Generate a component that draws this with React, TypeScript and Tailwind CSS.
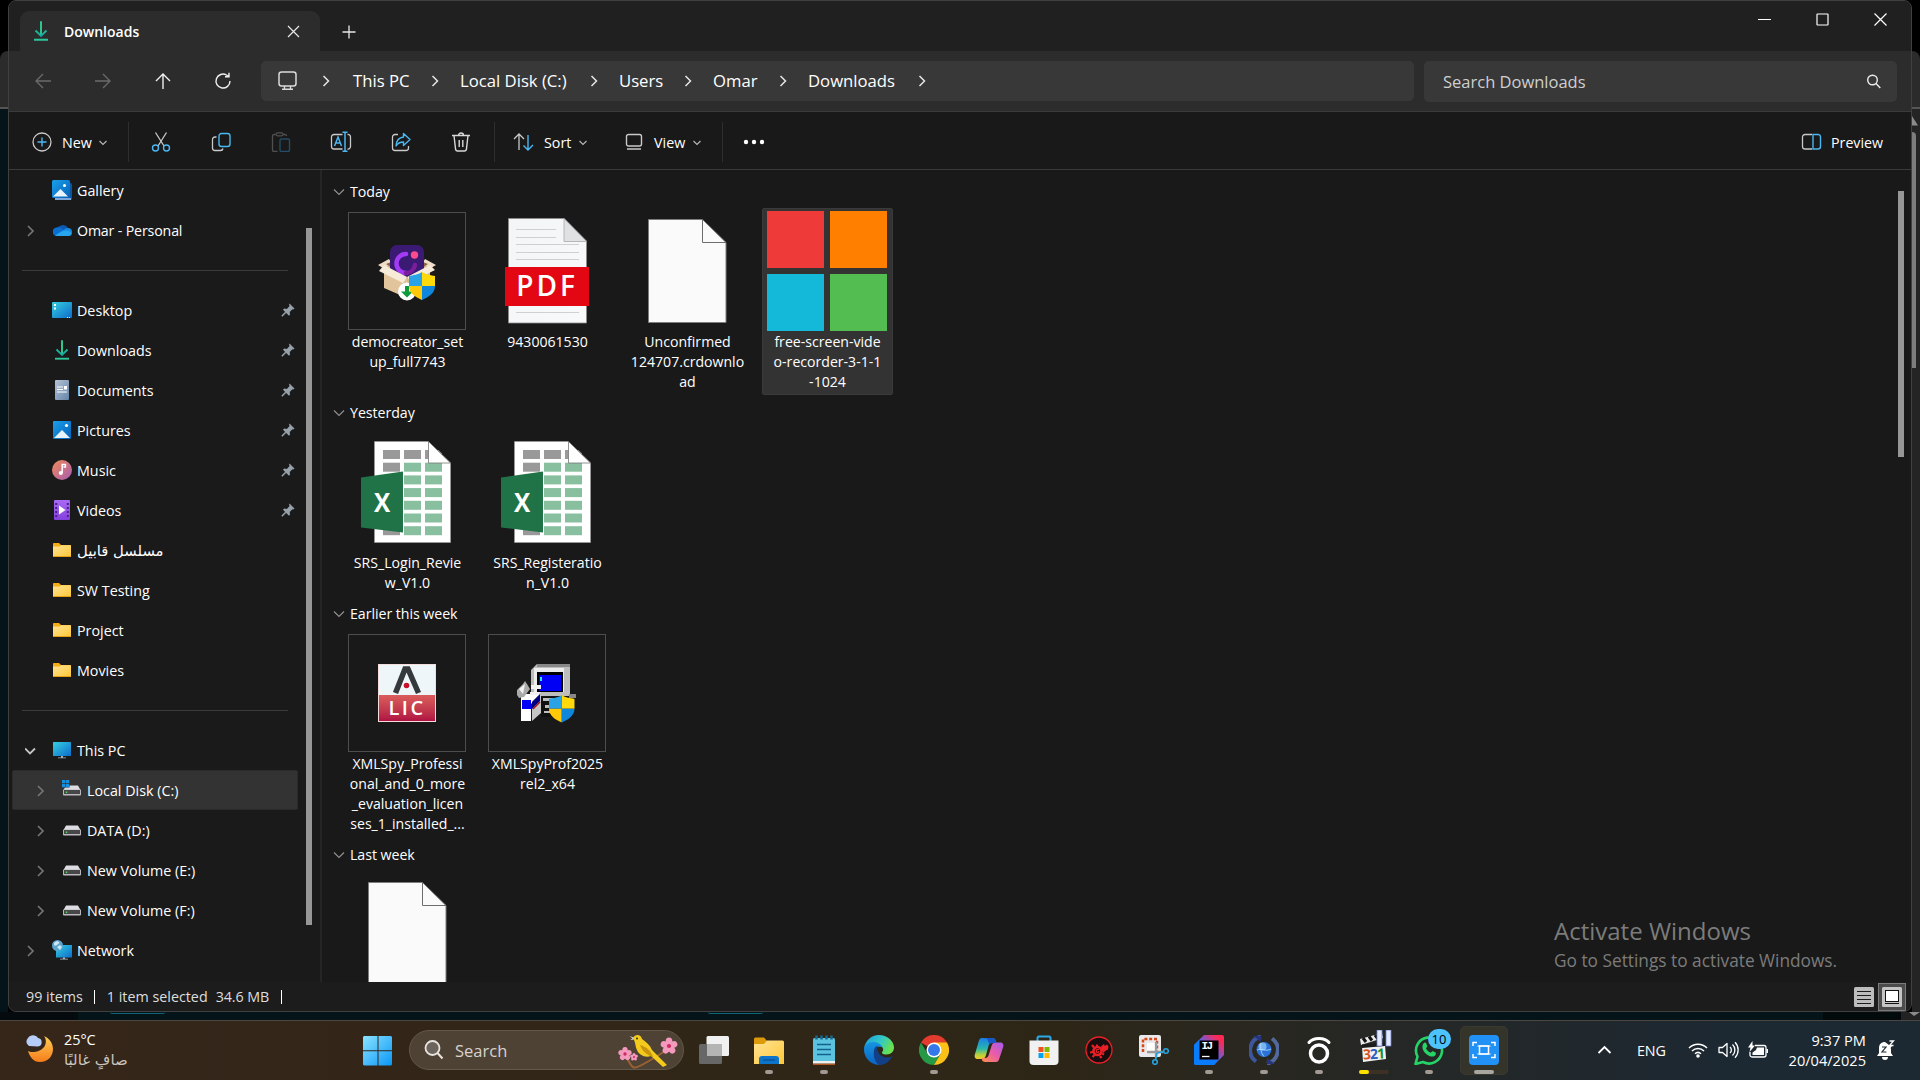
import React from "react";

type IconProps = { w?: number; h?: number; vb?: string; className?: string; children?: React.ReactNode };

function Svg({ w = 20, h = 20, vb, className = "", children }: IconProps) {
  return (
    <svg width={w} height={h} viewBox={vb ?? `0 0 ${w} ${h}`} fill="none" className={`shrink-0 ${className}`}>
      {children}
    </svg>
  );
}

/* ---------- gradients shared by several icons ---------- */
function Defs() {
  return (
    <svg width="0" height="0" className="absolute">
      <defs>
        <linearGradient id="gDown" x1="0" y1="0" x2="0" y2="1"><stop offset="0" stopColor="#35d08a" /><stop offset="1" stopColor="#12a7a0" /></linearGradient>
        <linearGradient id="gPic" x1="0" y1="0" x2="1" y2="1"><stop offset="0" stopColor="#1ba0ea" /><stop offset="1" stopColor="#0660b8" /></linearGradient>
        <linearGradient id="gDesk" x1="0" y1="0" x2="1" y2="1"><stop offset="0" stopColor="#35cfe0" /><stop offset="1" stopColor="#0d6ccb" /></linearGradient>
        <linearGradient id="gDoc" x1="0" y1="0" x2="1" y2="1"><stop offset="0" stopColor="#b5c3d6" /><stop offset="1" stopColor="#6484a8" /></linearGradient>
        <linearGradient id="gMusic" x1="0" y1="0" x2="1" y2="1"><stop offset="0" stopColor="#f28b57" /><stop offset="1" stopColor="#a75bb4" /></linearGradient>
        <linearGradient id="gVid" x1="0" y1="0" x2="0" y2="1"><stop offset="0" stopColor="#a86af5" /><stop offset="1" stopColor="#8440dc" /></linearGradient>
        <linearGradient id="gFold" x1="0" y1="0" x2="1" y2="1"><stop offset="0" stopColor="#ffe394" /><stop offset="1" stopColor="#ffc83a" /></linearGradient>
        <linearGradient id="gStart" x1="0" y1="0" x2="1" y2="1"><stop offset="0" stopColor="#8be3ff" /><stop offset="1" stopColor="#0a97f7" /></linearGradient>
        <linearGradient id="gPage" x1="0" y1="0" x2="1" y2="1"><stop offset="0" stopColor="#f4f5f6" /><stop offset="1" stopColor="#f8f9fa" /></linearGradient>
        <linearGradient id="gMoon" x1="0" y1="0" x2="0" y2="1"><stop offset="0" stopColor="#ffcf57" /><stop offset="1" stopColor="#f57c1a" /></linearGradient>
      </defs>
    </svg>
  );
}

/* ---------- sidebar icons ---------- */
const DownloadIcon = () => (
  <Svg>
    <path d="M10 0.5v13.500M4.500 9.500L10 15l5.500-5.500" stroke="url(#gDown)" strokeWidth="1.900" />
    <path d="M10 0.500v13" stroke="#2fc690" strokeWidth="1.900" />
    <path d="M3 18.700h14" stroke="#2cc69a" strokeWidth="1.900" />
  </Svg>
);
const GalleryIcon = () => (
  <Svg>
    <rect x="3" y="3" width="17" height="17" rx="1.500" fill="#0a559f" />
    <rect x="3" y="18" width="16" height="2" fill="#7da7d8" />
    <rect x="0" y="0" width="18" height="18" rx="1.500" fill="url(#gPic)" />
    <path d="M1 16.500L8.500 9l7.500 7.500z" fill="#e8f3fc" />
    <circle cx="12.500" cy="5.500" r="1.500" fill="#fff" />
  </Svg>
);
const CloudIcon = () => (
  <Svg>
    <path d="M5 9a6 5.500 0 0 1 11-1l-4 6z" fill="#0c59b0" />
    <path d="M4.500 16a4.300 4.300 0 0 1 0-8.500c3-.6 6 1 8 3.500L8 16z" fill="#0a6fd0" />
    <path d="M16 16a4 4 0 0 0 0-8c-3 0-4 2-7 3.500L4 16z" fill="#1689e0" />
    <path d="M3 15.500c3-2 8-5 11-5s5 1.500 5.500 3-1.500 2.500-3.500 2.500H5z" fill="#27a6ee" />
  </Svg>
);
const DesktopIcon = () => (
  <Svg>
    <rect x="0" y="2" width="20" height="16" rx="1" fill="url(#gDesk)" />
    <path d="M2 4h2v2H2zM2 7.500h2v2H2zM15 17h1v1h-1zM17 17h1v1h-1z" fill="#fff" />
  </Svg>
);
const DocumentsIcon = () => (
  <Svg>
    <rect x="3" y="0" width="14" height="20" rx="1" fill="url(#gDoc)" />
    <path d="M5 7h6M5 9.500h6M5 12h10" stroke="#fff" strokeWidth="1.200" />
    <rect x="12" y="6" width="3" height="3.500" fill="#fff" />
  </Svg>
);
const PicturesIcon = () => (
  <Svg>
    <rect x="1" y="1" width="18" height="18" rx="1" fill="url(#gPic)" />
    <path d="M2 18l8-8 8 8z" fill="#e8f3fc" />
    <circle cx="14.500" cy="5.500" r="1.600" fill="#fff" />
  </Svg>
);
const MusicIcon = () => (
  <Svg>
    <circle cx="10" cy="10" r="10" fill="url(#gMusic)" />
    <circle cx="8.800" cy="13" r="2.100" fill="#fff" />
    <path d="M10.200 13V4.500h3.200v2.500h-2" stroke="#fff" strokeWidth="1.500" />
  </Svg>
);
const VideosIcon = () => (
  <Svg>
    <rect x="2" y="0" width="16" height="20" rx="1" fill="url(#gVid)" />
    <path d="M4.200 3v16M15.800 3v16" stroke="#4a1e87" strokeWidth="2" strokeDasharray="2 2" />
    <path d="M7 5.500v9l6.500-4.500z" fill="#fff" />
  </Svg>
);
const FolderIcon = () => (
  <Svg>
    <path d="M1 4a1 1 0 0 1 1-1h5l2 2h9a1 1 0 0 1 1 1v10H1z" fill="#f3ac13" />
    <path d="M1 6.500h6.500L9 5.300h10V16.500H1z" fill="url(#gFold)" />
    <path d="M1 16.500h18" stroke="#e2a114" />
  </Svg>
);
const PcIcon = () => (
  <Svg>
    <rect x="1" y="2" width="18" height="14" rx=".5" fill="url(#gDesk)" />
    <path d="M9 16h2v1.500h3v.8H6v-.8h3z" fill="#a5afb8" />
  </Svg>
);
const DriveIcon = ({ win = false }: { win?: boolean }) => (
  <Svg>
    <path d="M4 5.500h12L19 11H1z" fill="#dcdce2" />
    <rect x="1" y="9.500" width="18" height="6" rx=".8" fill="#b9b9bd" />
    <rect x="2" y="10" width="16" height="4" fill="#47474a" />
    <rect x="3.800" y="11.500" width="1.500" height="1.500" fill="#49e04c" />
    {win && (
      <>
        <path d="M0 0h7.500v7.500H0z" fill="#333333" />
        <path d="M0 0h3.300v3.300H0zM3.900 0h3.300v3.300H3.900zM0 3.900h3.300v3.300H0zM3.900 3.900h3.300v3.300H3.900z" fill="#168fdf" />
      </>
    )}
  </Svg>
);
const NetworkIcon = () => (
  <Svg>
    <rect x="4" y="5" width="16" height="12.500" fill="url(#gDesk)" />
    <path d="M11 17.500h2v1.200h3v.8H8v-.8h3z" fill="#b5bcc3" />
    <circle cx="5.500" cy="5.500" r="5.500" fill="#5aa5ce" />
    <path d="M2 3c2-2 4-2 5-1s-1 2-2 3-2 1-3 0zM5 7l3-2 2 2-2 3z" fill="#cbe6f5" />
  </Svg>
);
const Pin = () => (
  <Svg w={14} h={14} className="ml-auto mr-[2px]">
    <path d="M8.500.5l5 5-1.200.9-.8-.2-2.800 2.900.3 2.500-1 1.200L2 6.800 3.200 5.600l2.600.3L8.600 3l-.6-1.300z" fill="#97a1a9" />
    <path d="M4.800 9.300L.8 13.300" stroke="#97a1a9" strokeWidth="1.500" />
  </Svg>
);

/* ---------- sidebar ---------- */
type Row = { label?: string; icon?: React.ReactNode; pin?: boolean; arrow?: "r" | "d"; child?: boolean; sel?: boolean; ar?: boolean; tight?: boolean };
const rows: Row[] = [
  { label: "Gallery", icon: <GalleryIcon /> },
  { label: "Omar - Personal", icon: <CloudIcon />, arrow: "r", tight: true },
  {},
  { label: "Desktop", icon: <DesktopIcon />, pin: true },
  { label: "Downloads", icon: <DownloadIcon />, pin: true },
  { label: "Documents", icon: <DocumentsIcon />, pin: true },
  { label: "Pictures", icon: <PicturesIcon />, pin: true },
  { label: "Music", icon: <MusicIcon />, pin: true },
  { label: "Videos", icon: <VideosIcon />, pin: true },
  { label: "مسلسل قابيل", icon: <FolderIcon />, ar: true },
  { label: "SW Testing", icon: <FolderIcon /> },
  { label: "Project", icon: <FolderIcon /> },
  { label: "Movies", icon: <FolderIcon /> },
  {},
  { label: "This PC", icon: <PcIcon />, arrow: "d" },
  { label: "Local Disk (C:)", icon: <DriveIcon win />, arrow: "r", child: true, sel: true },
  { label: "DATA (D:)", icon: <DriveIcon />, arrow: "r", child: true },
  { label: "New Volume (E:)", icon: <DriveIcon />, arrow: "r", child: true },
  { label: "New Volume (F:)", icon: <DriveIcon />, arrow: "r", child: true },
  { label: "Network", icon: <NetworkIcon />, arrow: "r" },
];

function SideRow({ r }: { r: Row }) {
  if (!r.label)
    return (
      <div className="flex h-10 items-center px-[10px]">
        <div className="h-px w-full bg-[#3b3b3b]" />
      </div>
    );
  return (
    <div className={`flex h-10 items-center border ${r.sel ? "rounded-[2px] border-[#2b2b2b] bg-[#333333]" : "border-transparent"} ${r.child ? "pl-[22px]" : "pl-[12px]"}`}>
      <div className="flex w-[27px] shrink-0 pt-px">
        {r.arrow === "r" && <Svg w={12} h={12}><path d="M3 1l5 5-5 5" stroke="#757575" strokeWidth="1.700" /></Svg>}
        {r.arrow === "d" && <Svg w={12} h={12}><path d="M0 3.500l5 5 5-5" stroke="#c4c4c4" strokeWidth="1.800" /></Svg>}
      </div>
      {r.icon}
      <span className={`ml-[5px] whitespace-nowrap pt-[2px] text-white ${r.ar ? "font-['DejaVu_Sans',sans-serif] text-[14.800px]" : r.tight ? "text-[14.200px] tracking-[-0.150px]" : "text-[14.300px]"}`}>{r.label}</span>
      {r.pin && <Pin />}
    </div>
  );
}

function Sidebar() {
  return (
    <div className="flex h-full w-[311px] shrink-0 bg-[#1a1a1a]">
      <div className="ml-[3px] w-[286px]">
        {rows.map((r, i) => <SideRow key={i} r={r} />)}
      </div>
      <div className="ml-2 mt-[58px] h-[697px] w-[6px] bg-[#979797]" />
    </div>
  );
}

/* ---------- file thumbnails ---------- */
const shield = (x: number, y: number, s: number) => (
  <g transform={`translate(${x} ${y}) scale(${s})`}>
    <path d="M13 0C9 3 4 3 0 4v10h13z" fill="#29a3e6" />
    <path d="M13 0c4 3 9 3 13 4v10H13z" fill="#ffd90a" />
    <path d="M0 14c0 7 6 11 13 14V14z" fill="#ffc907" />
    <path d="M26 14c0 7-6 11-13 14V14z" fill="#0e86dc" />
  </g>
);

const Framed = ({ children }: { children: React.ReactNode }) => (
  <div className="flex h-[118px] w-[118px] items-center justify-center border border-[#4d4d4d]">{children}</div>
);

const SetupThumb = () => (
  <Framed>
    <Svg w={58} h={56} className="mt-[4px]">
      <path d="M6 18l23-8 23 8v20L29 51 6 41z" fill="#d9b98f" />
      <path d="M0 20l11-6 3 5-9 4zM58 20l-11-6-3 5 9 4z" fill="#efdfc8" />
      <path d="M8 19l21-8 21 8-21 14z" fill="#8b6245" />
      <path d="M12 7a7 7 0 0 1 7-7h20a7 7 0 0 1 7 7v18L29 32 12 25z" fill="#3a1a73" />
      <path d="M28 9a9.500 9.500 0 0 0 0 19" stroke="#a33bf5" strokeWidth="4.500" strokeLinecap="round" />
      <path d="M28 28a9.500 9.500 0 0 0 9-8" stroke="#7c1d9e" strokeWidth="4.500" strokeLinecap="round" />
      <circle cx="36.500" cy="10" r="3.700" fill="#ff4b8c" />
      <path d="M6 26l23 7v20L6 43z" fill="#e2c49c" />
      <path d="M6 20l23 12-4 6L1 26zM52 20L29 32l4 5 24-12z" fill="#f6ead8" />
      <circle cx="29" cy="46.500" r="9" fill="#fff" />
      <path d="M27 41h4v5.500h4l-6 6-6-6h4z" fill="#0c9b3c" />
      {shield(31, 27, 1)}
    </Svg>
  </Framed>
);

const PdfThumb = () => (
  <div className="relative h-[118px] w-[118px]">
    <Svg w={118} h={118}>
      <path d="M20.500 6.500H76l22.500 22.500v82h-78z" fill="url(#gPage)" stroke="#8c8c8c" strokeWidth=".8" />
      <path d="M76 6.500V29.500h22.500z" fill="#dfe1e3" stroke="#a8a8a8" strokeWidth=".8" />
      <path d="M28 17.500h40M28 25.500h40M28 32.500h63M28 40.500h63M28 47.500h63M28 100.500h63" stroke="#cfd0d1" strokeWidth="1.200" />
      <rect x="17" y="55" width="84" height="39" fill="#e30613" />
    </Svg>
    <span className="absolute left-[17px] top-[54px] h-[39px] w-[84px] text-center text-[28px] font-semibold leading-[38px] tracking-[3px] text-white">PDF</span>
  </div>
);

const BlankThumb = () => (
  <Svg w={118} h={118}>
    <path d="M20.500 7.500h54L98 30.500v80H20.500z" fill="#fafafa" stroke="#7d7d7d" />
    <path d="M74.500 7.500v23H98" stroke="#6d6d6d" />
  </Svg>
);

const SquaresThumb = () => (
  <div className="-m-px grid h-[120px] w-[120px] grid-cols-2 gap-[6px]">
    <div className="bg-[#ef3a3a]" />
    <div className="bg-[#ff8000]" />
    <div className="bg-[#14b8d8]" />
    <div className="bg-[#54bd52]" />
  </div>
);

const ExcelThumb = () => (
  <div className="relative h-[118px] w-[118px]">
    <Svg w={118} h={118}>
      <path d="M26.500 8.500H80l22.500 21.500v79.500h-76z" fill="#fff" stroke="#a0a0a0" strokeWidth=".6" />
      {[0, 1, 2, 3, 4, 5, 6].map((r) =>
        [0, 1, 2].map((c) => (
          <rect key={`${r}-${c}`} x={35 + c * 21} y={17 + r * 12.7} width={17} height={9} fill={r === 0 || c === 0 ? "#999999" : "#87bf9f"} />
        )),
      )}
      <path d="M80.500 8.500v21.500h22z" fill="#fff" stroke="#777" strokeWidth=".8" />
      <path d="M81 8l22.500 21.500V8z" fill="#191919" />
      <path d="M13 44.500l42-6v61l-42-5z" fill="#207346" />
    </Svg>
    <span className="absolute left-[13px] top-[53px] w-[42px] scale-x-90 text-center text-[27px] font-bold leading-[31px] text-white">X</span>
  </div>
);

const LicThumb = () => (
  <Framed>
    <div className="flex h-[58px] w-[58px] flex-col border border-[#f4dcdc] bg-[#e8f5fa]">
      <Svg w={56} h={30}>
        <path d="M0 0h56v30H0z" fill="#eef6fa" />
        <path d="M16.500 28L26 4h3l10.500 24" stroke="#35393b" strokeWidth="5.500" />
        <circle cx="27.500" cy="20.500" r="2.800" fill="#c8102e" />
      </Svg>
      <div className="h-[26px] w-[56px] bg-gradient-to-b from-[#da5d5c] to-[#b01143] text-center text-[20px] font-semibold leading-[25px] tracking-[2.500px] text-white">LIC</div>
    </div>
  </Framed>
);

const InstallerThumb = () => (
  <Framed>
    <Svg w={60} h={60} className="mb-px">
      <path d="M20 1h33v32H14V7z" fill="#bdbdbd" />
      <path d="M20 1h33v3H20z" fill="#888" />
      <path d="M17 5h30v24H17z" fill="#ececec" />
      <path d="M20 9h26v20H20z" fill="#000" />
      <path d="M22 12h22v16H22z" fill="#0000f5" />
      <path d="M23 14h2v4h-2z" fill="#25e8ff" />
      <path d="M24 34h32v20H24z" fill="#111" />
      <path d="M26 35h14v3H26zM28 42h8v3h-8zM27 48h12v2H27z" fill="#bdbdbd" />
      <path d="M52 31h7v4h-7z" fill="#888" />
      <path d="M4 31h19l-9 10v17H4z" fill="#fff" />
      <path d="M15 38l9-7v19l-9 8z" fill="#c5c5c5" />
      <path d="M5 37h9v9H5z" fill="#0000f5" />
      <path d="M15 39l8-8v7l-8 8z" fill="#000080" />
      <path d="M16 46l7-7" stroke="#a31313" strokeWidth="1.500" />
      <path d="M0 27l6-6 2-3 2 3 3 5-6 8-5 1-2-3z" fill="#aaa" />
      <path d="M2 26l6-5-2 10zM14 22h10v4H14zM13 29h11l-3 3h-8z" fill="#f1f1f1" />
      {shield(32, 32, 0.98)}
    </Svg>
  </Framed>
);

type FileItem = { lines: string[]; thumb: React.ReactNode; sel?: boolean };
const groups: { title: string; h: string; files: FileItem[] }[] = [
  {
    title: "Today",
    h: "h-[181px]",
    files: [
      { lines: ["democreator_set", "up_full7743"], thumb: <SetupThumb /> },
      { lines: ["9430061530"], thumb: <PdfThumb /> },
      { lines: ["Unconfirmed", "124707.crdownlo", "ad"], thumb: <BlankThumb /> },
      { lines: ["free-screen-vide", "o-recorder-3-1-1", "-1024"], thumb: <SquaresThumb />, sel: true },
    ],
  },
  {
    title: "Yesterday",
    h: "h-[161px]",
    files: [
      { lines: ["SRS_Login_Revie", "w_V1.0"], thumb: <ExcelThumb /> },
      { lines: ["SRS_Registeratio", "n_V1.0"], thumb: <ExcelThumb /> },
    ],
  },
  {
    title: "Earlier this week",
    h: "h-[201px]",
    files: [
      { lines: ["XMLSpy_Professi", "onal_and_0_more", "_evaluation_licen", "ses_1_installed_..."], thumb: <LicThumb /> },
      { lines: ["XMLSpyProf2025", "rel2_x64"], thumb: <InstallerThumb /> },
    ],
  },
  { title: "Last week", h: "h-[120px]", files: [{ lines: [], thumb: <BlankThumb /> }] },
];

function Files() {
  return (
    <div className="relative flex-1 overflow-hidden border-l-2 border-[#252525] bg-[#191919] pl-[11px] pt-[2px]">
      {groups.map((g) => (
        <section key={g.title}>
          <div className="flex h-10 items-center">
            <Svg w={12} h={12}><path d="M1 3.500l5 5 5-5" stroke="#8f8f8f" strokeWidth="1.200" /></Svg>
            <span className="ml-[5px] text-[14.200px] tracking-[-0.050px] text-white">{g.title}</span>
          </div>
          <div className={`flex ${g.h} items-start pl-[8px]`}>
            {g.files.map((f, i) => (
              <div key={i} className={`mr-2 flex flex-col items-center ${f.sel ? "-mt-1 ml-px h-[187px] w-[131px] rounded-[2px] border border-[#3a3a3a] bg-[#333333] pr-px pt-[3px]" : "w-[132px]"}`}>
                {f.thumb}
                <div className="mt-[2px] whitespace-nowrap pl-px text-center text-[14.100px] leading-5 text-white">
                  {f.lines.map((l) => <div key={l}>{l}</div>)}
                </div>
              </div>
            ))}
          </div>
        </section>
      ))}
      <div className="absolute right-[7px] top-[21px] h-[266px] w-[6px] bg-[#979797]" />
      <div className="absolute left-[1232px] top-[743px] text-[#7c7c7c]">
        <div className="whitespace-nowrap text-[24px] leading-9">Activate Windows</div>
        <div className="whitespace-nowrap text-[17.300px] leading-[23px]">Go to Settings to activate Windows.</div>
      </div>
    </div>
  );
}

/* ---------- header ---------- */
function TabStrip() {
  return (
    <div className="flex h-[50px] shrink-0 items-start bg-[#202020]">
      <div className="ml-[11px] mt-[10px] flex h-10 w-[300px] items-center rounded-t-[9px] bg-[#2c2c2c] pl-[11px] pr-[20px]">
        <DownloadIcon />
        <span className="ml-[13px] text-[14px] font-semibold text-white">Downloads</span>
        <Svg w={13} h={13} className="ml-auto"><path d="M1 1l11 11M12 1L1 12" stroke="#e8e8e8" strokeWidth="1.200" /></Svg>
      </div>
      <Svg w={14} h={14} className="ml-[22px] mt-[24px]"><path d="M7 .5v13M.5 7h13" stroke="#e8e8e8" strokeWidth="1.300" /></Svg>
      <div className="ml-auto mr-[24px] mt-[12px] flex items-center gap-[45px]">
        <Svg w={13} h={13}><path d="M0 6.500h13" stroke="#fff" strokeWidth="1.100" /></Svg>
        <Svg w={13} h={13}><rect x="1" y="1" width="11" height="11" stroke="#fff" strokeWidth="1.200" rx=".5" /></Svg>
        <Svg w={13} h={13}><path d="M.5 .5l12 12M12.500 .5l-12 12" stroke="#fff" strokeWidth="1.200" /></Svg>
      </div>
    </div>
  );
}

const CrumbArrow = ({ className = "" }: { className?: string }) => (
  <Svg w={8} h={12} className={className}><path d="M1.500 1l5 5-5 5" stroke="#e6e6e6" strokeWidth="1.500" /></Svg>
);

const crumbs: [string, string][] = [
  ["This PC", "w-[107px]"],
  ["Local Disk (C:)", "w-[159px]"],
  ["Users", "w-[94px]"],
  ["Omar", "w-[95px]"],
  ["Downloads", "w-[139px]"],
];

function AddressRow() {
  return (
    <div className="flex h-[61px] shrink-0 items-start border-b border-[#3b3b3b] bg-[#2c2c2c] pt-[10px]">
      <div className="flex h-10 w-[252px] items-center pl-[25px]">
        <Svg w={18} h={18}><path d="M17 9H2M9 2L2 9l7 7" stroke="#6b6b6b" strokeWidth="1.300" /></Svg>
        <Svg w={18} h={18} className="ml-[42px]"><path d="M1 9h15M9 2l7 7-7 7" stroke="#6b6b6b" strokeWidth="1.300" /></Svg>
        <Svg w={18} h={18} className="ml-[42px]"><path d="M9 17V2M2 9l7-7 7 7" stroke="#f0f0f0" strokeWidth="1.400" /></Svg>
        <Svg w={18} h={18} className="ml-[42px]"><path d="M12.500 3A7 7 0 1 0 16 9M15 .8v4h-4M12.500 3l2 1.500" stroke="#f0f0f0" strokeWidth="1.400" /></Svg>
      </div>
      <div className="flex h-10 w-[1153px] items-center rounded-[5px] bg-[#383838] pl-[16px]">
        <Svg w={21} h={20}><rect x="2" y="1" width="17" height="14" rx="2.500" stroke="#dadada" strokeWidth="1.500" /><path d="M7.500 15v3M13.500 15v3M5 18.300h11" stroke="#dadada" strokeWidth="1.400" /></Svg>
        <CrumbArrow className="ml-[24px] mr-[23px]" />
        {crumbs.map(([c, w]) => (
          <div key={c} className={`flex shrink-0 items-center justify-between ${w}`}>
            <span className="whitespace-nowrap text-[16.700px] leading-6 text-white">{c}</span>
            <CrumbArrow className="mr-[21px]" />
          </div>
        ))}
      </div>
      <div className="ml-[10px] flex h-[41px] w-[473px] items-center justify-between rounded-[5px] bg-[#383838] pl-[19px] pr-[16px]">
        <span className="pt-px text-[16.500px] text-[#cfcfcf]">Search Downloads</span>
        <Svg w={15} h={15}><circle cx="6.500" cy="6" r="4.800" stroke="#ececec" strokeWidth="1.400" /><path d="M10 9.500l4.300 4.500" stroke="#ececec" strokeWidth="1.400" /></Svg>
      </div>
    </div>
  );
}

const Chev = () => <Svg w={8} h={8} className="mt-px"><path d="M.5 2L4 5.500 7.500 2" stroke="#b5b5b5" strokeWidth="1.200" /></Svg>;
const Sep = ({ className }: { className: string }) => <div className={`h-10 w-px bg-[#2e2e2e] ${className}`} />;

function CommandBar() {
  const g = "#c9c9c9";
  const b = "#4cb6f0";
  return (
    <div className="flex h-[58px] shrink-0 items-center border-b border-[#3b3b3b] bg-[#191919] pl-[23px] pt-[3px] text-[14.300px] text-white">
      <Svg w={20} h={20}><circle cx="10" cy="10" r="9" stroke={g} strokeWidth="1.300" /><path d="M10 5.500v9M5.500 10h9" stroke={b} strokeWidth="1.400" /></Svg>
      <span className="ml-[10px] mr-[7px] w-[30px] pt-px">New</span>
      <Chev />
      <Sep className="ml-[21px]" />
      <div className="ml-[22px] flex gap-10">
        <Svg><path d="M4.500 0.500L13 14M15.500 .5L7 14" stroke={g} strokeWidth="1.300" /><circle cx="4.500" cy="16" r="3" stroke={b} strokeWidth="1.400" /><circle cx="15.500" cy="16" r="3" stroke={b} strokeWidth="1.400" /></Svg>
        <Svg><path d="M5.500 5H4a2.500 2.500 0 0 0-2.500 2.500V16A2.500 2.500 0 0 0 4 18.500h5.500A2.500 2.500 0 0 0 12 16.500" stroke={g} strokeWidth="1.300" /><rect x="8" y="1.500" width="11" height="13" rx="2.500" stroke={b} strokeWidth="1.400" /></Svg>
        <Svg><path d="M4.500 2.500H3A1.500 1.500 0 0 0 1.500 4v14A1.500 1.500 0 0 0 3 19.500h3.500M12 2.500h2A1.500 1.500 0 0 1 15.500 4" stroke="#505050" strokeWidth="1.300" /><rect x="5" y=".8" width="7" height="3" rx="1.500" stroke="#505050" strokeWidth="1.200" /><rect x="9" y="7" width="9.500" height="12.500" rx="1.500" stroke="#244c64" strokeWidth="1.400" /></Svg>
        <Svg className="overflow-visible"><path d="M11.500 2.500H3A2.500 2.500 0 0 0 .5 5v9.500A2.500 2.500 0 0 0 3 17h8.500M16.500 2.500A2.500 2.500 0 0 1 19.500 5v9.500a2.500 2.500 0 0 1-3 2.500" stroke={g} strokeWidth="1.300" /><path d="M3.500 14L7 5l3.500 9M4.800 11h4.500M14 .5v18.500M11.500 .3h5M11.500 19.300h5" stroke={b} strokeWidth="1.500" /></Svg>
        <Svg><path d="M7 2.500H4A2.500 2.500 0 0 0 1.500 5v11A2.500 2.500 0 0 0 4 18.500h11a2.500 2.500 0 0 0 2.500-2.500v-2" stroke={g} strokeWidth="1.300" /><path d="M12.500 1.500l6.500 6-6.500 6v-3.500c-4 0-6 1.500-7.500 4 .3-5 3-8.500 7.500-9z" stroke={b} strokeWidth="1.400" strokeLinejoin="round" /></Svg>
        <Svg><path d="M1 3.500h18M3 3.500l1.600 14A2 2 0 0 0 6.500 19h7a2 2 0 0 0 1.900-1.500L17 3.500M7.500 3.500a2.500 2.500 0 0 1 5 0M8.200 8v7M11.800 8v7" stroke="#d8d8d8" strokeWidth="1.400" /></Svg>
      </div>
      <Sep className="ml-[23px]" />
      <Svg w={21} h={20} className="ml-[18px]"><path d="M6 18V2.500M1 7l5-5 5 5" stroke={g} strokeWidth="1.300" /><path d="M15 3v15M10.500 13.500L15 18l5-5" stroke={b} strokeWidth="1.400" /></Svg>
      <span className="ml-[10px] mr-[7px] w-[28px] pt-px">Sort</span>
      <Chev />
      <Svg w={18} h={18} className="ml-[38px]"><rect x="1.500" y="1.500" width="15" height="11.500" rx="2" stroke={g} strokeWidth="1.400" /><path d="M2 16h14" stroke={g} strokeWidth="1.300" /></Svg>
      <span className="ml-[11px] mr-[6px] w-[33px] pt-px">View</span>
      <Chev />
      <Sep className="ml-[21px]" />
      <Svg w={22} h={6} className="ml-[20px]"><circle cx="3" cy="3" r="2.200" fill="#fff" /><circle cx="11" cy="3" r="2.200" fill="#fff" /><circle cx="19" cy="3" r="2.200" fill="#fff" /></Svg>
      <Svg w={21} h={18} className="ml-auto"><path d="M11 1.500H4A2.500 2.500 0 0 0 1.500 4v9.500A2.500 2.500 0 0 0 4 16h7" stroke={g} strokeWidth="1.300" /><path d="M12 1.500h4.500A2.500 2.500 0 0 1 19.500 4v9.500a2.500 2.500 0 0 1-2.500 2.500h-5z" stroke={b} strokeWidth="1.400" /></Svg>
      <span className="ml-[9px] mr-[28px] pt-px text-[14.200px]">Preview</span>
    </div>
  );
}

function StatusBar() {
  return (
    <div className="flex h-[29px] shrink-0 items-center bg-[#1c1c1c] pl-[17px] text-[14.300px] text-[#dedede]">
      <span>99 items</span>
      <div className="ml-[11px] h-[14px] w-px bg-white" />
      <span className="ml-[12px]">1 item selected</span>
      <span className="ml-[8px] tracking-[-0.100px]">34.6 MB</span>
      <div className="ml-[12px] h-[14px] w-px bg-white" />
      <Svg w={20} h={20} className="ml-auto"><rect width="20" height="20" rx="1.500" fill="#bcbcbc" /><path d="M3 4.500h14M3 8.500h14M3 12.500h14M3 16.500h14" stroke="#1c1c1c" /></Svg>
      <div className="ml-1 mr-[5px] flex h-7 w-7 items-center justify-center border border-[#7b7b7b] bg-[#4c4c4c]">
        <Svg w={20} h={20}><rect width="20" height="20" rx="1.500" fill="#c4c4c4" /><rect x="3.500" y="3.500" width="13" height="11" fill="#fff" stroke="#111" /><path d="M3 16.500h14" stroke="#111" /></Svg>
      </div>
    </div>
  );
}

/* ---------- taskbar ---------- */
const Blossom = ({ x, y, r }: { x: number; y: number; r: number }) => (
  <g fill="#f49abd">
    {[0, 72, 144, 216, 288].map((a) => (
      <ellipse key={a} cx={x} cy={y - r * 0.6} rx={r * 0.45} ry={r * 0.55} transform={`rotate(${a} ${x} ${y})`} />
    ))}
    <circle cx={x} cy={y} r={r * 0.28} fill="#c92a5f" />
  </g>
);
const Bird = () => (
  <Svg w={62} h={38}>
    <path d="M8 24c3 4 5 10 8 10.500s16-7 24-12 11-7 19-12" stroke="#9a6233" strokeWidth="2" />
    <path d="M15 5c2-4 8-4 9 1 4 3 8 6 10 11l15 15-4 2-12-11c-6 2-12-1-14-6-2-4-1-7-4-12z" fill="#f4cb1c" />
    <path d="M22 12c7 2 11 6 13 12-6-2-11-6-13-12z" fill="#c9950f" />
    <path d="M15.500 4.500l-4-1.500 3 2.500-2.500 1.500 4-.5z" fill="#d8d8d8" />
    <circle cx="19" cy="5.500" r=".9" fill="#222" />
    <Blossom x={7} y={21} r={6} />
    <Blossom x={51} y={13} r={7.5} />
    <Blossom x={16} y={24} r={3.5} />
  </Svg>
);

const TaskViewI = () => (
  <Svg w={30} h={30}><rect x="7.500" y="1" width="22.500" height="20" rx="1.500" fill="#f0f0f0" /><rect x="0" y="9" width="23" height="20" rx="1.500" fill="#676767" /><path d="M8 9h15v12H8z" fill="#b4b4b4" /></Svg>
);
const ExplorerI = () => (
  <Svg w={30} h={30}><path d="M0 4a1.500 1.500 0 0 1 1.500-1.500H10l3 3.500h16v8H0z" fill="#dd9b0b" /><path d="M0 9h10l3-3.500h15.500A1.500 1.500 0 0 1 30 7v22H0z" fill="url(#gFold)" /><path d="M5 29v-5a3 3 0 0 1 3-3h14a3 3 0 0 1 3 3v5z" fill="#0d74cb" /><path d="M9 25h12" stroke="#0a4c8c" strokeWidth="1.200" /></Svg>
);
const NotepadI = () => (
  <Svg w={30} h={30}><rect x="4" y="3" width="22" height="27" rx="1.500" fill="#5cc3de" /><path d="M4 26h22v2.500H4z" fill="#f0f0f0" /><path d="M4 28.500h22V30H4z" fill="#b2561f" /><path d="M8 9.500h14M8 14.500h14M8 19.500h14" stroke="#12608f" strokeWidth="1.600" /><path d="M7.500 .5v4M12.500 .5v4M17.500 .5v4M22.500 .5v4" stroke="#16688f" strokeWidth="2.500" /></Svg>
);
const EdgeI = () => (
  <Svg w={30} h={30}>
    <defs>
      <linearGradient id="eg1" x1="0" y1="0" x2="1" y2=".4"><stop offset="0" stopColor="#1c9ce0" /><stop offset=".6" stopColor="#34c9c4" /><stop offset="1" stopColor="#67e052" /></linearGradient>
      <linearGradient id="eg2" x1="0" y1="0" x2="0" y2="1"><stop offset="0" stopColor="#1594e2" /><stop offset="1" stopColor="#0b62c2" /></linearGradient>
    </defs>
    <path d="M0 14C1 6 7 0 15 0s15 6 15 12.500c0 4-3 7-7.500 7-4 0-5.500-1.500-4-3 .8-1 .8-2 .3-3.200C17.500 10 14 8 10 8 5 8 1.500 10.500 0 14z" fill="url(#eg1)" />
    <path d="M0 15c0-5 4-8 9.500-8 4.500 0 8 2.500 9 5.500-3-2-8-.5-8.500 4.500-.5 6 4 11 8 12.500A15 15 0 0 1 0 15z" fill="url(#eg2)" />
    <path d="M10 16c0-2 1.300-4.500 3.500-5.500-1.500 5 2.500 12 9.500 12 2.500 0 4-.7 5.500-1.500-2.500 5-7 9-13 9-4-2-6.500-8-5.500-14z" fill="#123f86" />
  </Svg>
);
const ChromeI = () => (
  <Svg w={30} h={30}>
    <path d="M15 15L2 7.500A15 15 0 0 1 28 7.500z" fill="#e33b2e" />
    <path d="M15 15L8.500 18.500 2 7.500A15 15 0 0 0 15 30l6.500-11z" fill="#269947" />
    <path d="M15 7.500h13A15 15 0 0 1 15 30l6.500-11z" fill="#fbc116" />
    <circle cx="15" cy="15" r="7.500" fill="#fff" /><circle cx="15" cy="15" r="6" fill="#3478ea" />
  </Svg>
);
const CopilotI = () => (
  <Svg w={30} h={30}>
    <defs>
      <linearGradient id="cp1" x1="0" y1="0" x2="0" y2="1"><stop offset="0" stopColor="#1b7fe6" /><stop offset=".5" stopColor="#26b5b0" /><stop offset=".8" stopColor="#b8d13a" /><stop offset="1" stopColor="#f3c82f" /></linearGradient>
      <linearGradient id="cp2" x1="1" y1="0" x2="0" y2="1"><stop offset="0" stopColor="#a35bf0" /><stop offset=".5" stopColor="#ea5ca8" /><stop offset="1" stopColor="#ff9146" /></linearGradient>
    </defs>
    <path d="M8 3h10c3 0 4 2 4.500 5H18c-2 0-3 .8-3.500 3L12 20c-.7 2.500-2 4-4.500 4H4c-3 0-4-2-3-5L4.500 7C5.200 4.500 6 3 8 3z" fill="url(#cp1)" />
    <path d="M22 27H12c-3 0-4-1-4.500-4H11c2 0 3-1 3.700-3L17.500 11c.7-2.500 2-3.500 4.500-3.500h4c3 0 4 2 3 5L25.500 23c-.7 2.500-1.500 4-3.500 4z" fill="url(#cp2)" />
    <path d="M8 3h10c3 0 4 2 4.500 5H18c-1 0-2 .3-2.700 1L13 3.500z" fill="#1857c9" />
  </Svg>
);
const StoreI = () => (
  <Svg w={30} h={30}><path d="M8.500 7V3A1.500 1.500 0 0 1 10 1.500h10A1.500 1.500 0 0 1 21.500 3v4" stroke="#2ca9e8" strokeWidth="2" /><path d="M.5 5.500h29V26a4 4 0 0 1-4 4h-21a4 4 0 0 1-4-4z" fill="#f1f1f1" /><path d="M9.500 12h5v5h-5z" fill="#f25022" /><path d="M15.500 12h5v5h-5z" fill="#7fba00" /><path d="M9.500 18h5v5h-5z" fill="#00a4ef" /><path d="M15.500 18h5v5h-5z" fill="#ffb900" /></Svg>
);
const RedI = () => (
  <Svg w={30} h={30}>
    <circle cx="15" cy="15" r="13" fill="#170d0e" stroke="#ea2027" strokeWidth="1.300" />
    <circle cx="13.500" cy="16" r="4" stroke="#ea2027" strokeWidth="2.600" />
    <path d="M10 12.500L8 10M9 17l-3 .5M10.500 20l-2 2M16 21l1.500 2M13 11l0-1.500M18 18.500l2 1" stroke="#ea2027" strokeWidth="2.200" />
    <path d="M17 11.500l3-2.500.8 2 2.200-1.500 1.500 2-.5 3-3 1.500-1.500 2-1.500-3z" fill="#ea2027" />
    <path d="M15 14.500h-2.500v3h2v-1.500" stroke="#ea2027" strokeWidth="1" />
  </Svg>
);
const SnipI = () => (
  <Svg w={30} h={30}><rect x="0" y="0" width="22" height="22" rx="2" fill="#e9e9ec" /><path d="M4 17V4h14v13" stroke="#d8491a" strokeWidth="2.500" strokeDasharray="3 1.800" /><path d="M8 8h8v8H8z" fill="#fff" /><path d="M17 7v16M8 17h16" stroke="#9a9a9a" strokeWidth="2.300" /><circle cx="27" cy="16" r="2.300" stroke="#26a2e0" strokeWidth="1.600" /><circle cx="16" cy="27" r="2.300" stroke="#26a2e0" strokeWidth="1.600" /><path d="M18 18l-1.500 7M18 18l7-1.500" stroke="#26a2e0" strokeWidth="1.600" /></Svg>
);
const IdeaI = () => (
  <div className="relative h-[30px] w-[30px]">
    <Svg w={30} h={30}>
      <defs><linearGradient id="ij" x1="0" y1="1" x2="1" y2="0"><stop offset="0" stopColor="#087cfa" /><stop offset=".5" stopColor="#5a63e8" /><stop offset=".85" stopColor="#fe2857" /></linearGradient></defs>
      <path d="M10 0h18a2 2 0 0 1 2 2v18L20 30H2a2 2 0 0 1-2-2V10z" fill="url(#ij)" /><path d="M0 10l5-5v20h19l-4 5H2a2 2 0 0 1-2-2z" fill="#087cfa" /><path d="M5.500 5.500h19v19h-19z" fill="#000" /><path d="M8 21.500h7.500" stroke="#fff" strokeWidth="1.300" />
    </Svg>
    <span className="absolute left-[8px] top-[6px] font-['Liberation_Mono',monospace] text-[11px] font-bold leading-[11px] tracking-[-1.500px] text-white">IJ</span>
  </div>
);
const GlobeI = () => (
  <Svg w={30} h={30}><path d="M12 1.500A14 14 0 0 0 7 26.500" stroke="#3f5ba8" strokeWidth="4" opacity=".9" /><path d="M18 28.500A14 14 0 0 0 23 3.500" stroke="#5a76b4" strokeWidth="4" opacity=".85" /><path d="M4 1h8v6zM26 29h-8v-6z" fill="#27357f" /><circle cx="15" cy="14.500" r="7.500" fill="#2a72d8" /><circle cx="13.500" cy="11.500" r="4" fill="#9cd0f8" opacity=".7" /><path d="M8 15c4-2 9 2 14-1M12 8c-1 5 0 10 3 13.500" stroke="#bfe2ff" strokeWidth=".8" /></Svg>
);
const OI = () => (
  <Svg w={30} h={30}><circle cx="15" cy="18.500" r="8.500" stroke="#fff" strokeWidth="3.500" /><path d="M5 7.500C9 2 21 2 25 7.500" stroke="#fff" strokeWidth="3" strokeLinecap="round" /></Svg>
);
const ClapI = () => (
  <div className="relative h-[34px] w-[34px]">
    <Svg w={34} h={34}>
      <path d="M1 9L23 3l1 5L2 15z" fill="#e9e9e9" /><path d="M4 8l3 4M10 6.500l3 4M16 5l3 4" stroke="#141414" strokeWidth="3" /><path d="M3 16l23-2 1 15-23 3z" fill="#f2f2f2" /><path d="M3 14.500l23-2v3.500L3 18z" fill="#1b1b1b" />
      <path d="M18 0h5v16h-5zM27 0h5v16h-5z" fill="#e4eaff" stroke="#6e82cf" strokeWidth=".8" />
    </Svg>
    <span className="absolute left-[4px] top-[17px] -rotate-3 text-[14px] font-bold leading-[13px] tracking-[-1px]"><span className="text-[#d8521c]">3</span><span className="text-[#2b5fc4]">2</span><span className="text-[#20912f]">1</span></span>
  </div>
);
const WaI = () => (
  <div className="relative h-[30px] w-[30px]">
    <Svg w={30} h={30}><path d="M1.500 29l2-7.500A13 13 0 1 1 9 27z" stroke="#25d366" strokeWidth="2.600" strokeLinejoin="round" /><path d="M9.500 8.500c1-1.500 2.500-1 3 .5l.7 2c.2.800-.3 1.300-1.200 2.200 1 2 2.500 3.500 4.800 4.500 1-1.200 1.500-1.700 2.300-1.400l2.400 1.200c.8.500.6 2.500-1.300 3.700-3 1.500-9-1.700-11-6-1.200-2.500-1-5.200.3-6.700z" fill="#25d366" /></Svg>
    <div className="absolute -top-[6px] left-[14px] flex h-5 w-[23px] items-center justify-center rounded-full bg-[#4cc2ff] text-[13px] leading-none text-black">10</div>
  </div>
);
const CaptureI = () => (
  <Svg w={30} h={30}><rect width="30" height="30" rx="4" fill="#2191f5" /><path d="M4 11V7.500h4M22 7.500h4V11M4 19v3.500h4M22 22.500h4V19" stroke="#fff" strokeWidth="1.500" /><rect x="10.500" y="11" width="9" height="8" stroke="#fff" strokeWidth="1.500" /><path d="M8.500 11h13M8.500 19h13" stroke="#fff" strokeWidth="1.200" /></Svg>
);

const apps: { icon: React.ReactNode; run?: "dot" | "wide" | "prog" }[] = [
  { icon: <TaskViewI /> }, { icon: <ExplorerI />, run: "dot" }, { icon: <NotepadI />, run: "dot" }, { icon: <EdgeI /> },
  { icon: <ChromeI />, run: "dot" }, { icon: <CopilotI /> }, { icon: <StoreI /> }, { icon: <RedI /> }, { icon: <SnipI /> },
  { icon: <IdeaI />, run: "dot" }, { icon: <GlobeI />, run: "dot" }, { icon: <OI />, run: "dot" }, { icon: <ClapI />, run: "prog" },
  { icon: <WaI />, run: "dot" }, { icon: <CaptureI />, run: "wide" },
];

function Taskbar() {
  return (
    <div className="flex h-[60px] items-start border-t border-[#4b4640] bg-gradient-to-r from-[#36261a] from-0% via-[#2d2617] via-55% to-[#1c2832] to-90%">
      <div className="flex h-full w-[363px] items-start pl-[24px]">
        <Svg w={30} h={30} className="mt-[13px]">
          <path d="M20 2c4 5 2 15-10 16-3 0-4 0-6-1 2 6 5 11 12 11 8 0 13-6 13-13 0-6-4-11-9-13z" fill="url(#gMoon)" />
          <path d="M5 12a5 5 0 0 1-1-8A6 6 0 0 1 14 4a4.300 4.300 0 0 1 0 8.500z" fill="#b6cdf8" />
        </Svg>
        <div className="ml-[10px] mt-[9px] text-[14.400px] leading-5 text-white">
          <div>25°C</div>
          <div className="font-['DejaVu_Sans',sans-serif] text-[15px] text-[#c9c4bf]" dir="rtl">صافٍ غالبًا</div>
        </div>
      </div>
      <Svg w={30} h={30} className="mt-[15px]"><path d="M1 0h13.500v14.300H0V1zM15.500 0H28l1 1v13.300H15.500zM0 15.300h14.500V29.500H1l-1-1zM15.500 15.300H29v13.200l-1 1H15.500z" fill="url(#gStart)" /></Svg>
      <div className="ml-4 mt-[9px] flex h-10 w-[275px] items-center rounded-full border border-[#625749] bg-[#4e4235] pl-[14px]">
        <Svg w={20} h={20}><circle cx="8.500" cy="8" r="7" stroke="#e8e4df" strokeWidth="1.800" fill="#6b645d" /><path d="M13.500 13l5 5.500" stroke="#e8e4df" strokeWidth="2" /></Svg>
        <span className="ml-[11px] pt-[2px] text-[16.500px] text-[#d8d3cd]">Search</span>
        <div className="ml-auto mr-[3px] pt-[3px]"><Bird /></div>
      </div>
      <div className="ml-[2px] flex">
        {apps.map((a, i) => (
          <div key={i} className={`relative mt-[5px] flex h-[49px] w-[55px] justify-center ${a.run === "prog" ? "pt-[4px]" : "pt-[9px]"}`}>
            {a.run === "wide" && <div className="absolute inset-x-[3.500px] inset-y-0 rounded-[5px] border border-[#3a392f] bg-[#34342a]" />}
            <div className={`relative ${a.run === "prog" ? "left-[2px]" : ""}`}>{a.icon}</div>
            {a.run === "dot" && <div className="absolute bottom-[1px] h-1 w-2 rounded-full bg-[#a19a92]" />}
            {a.run === "wide" && <div className="absolute bottom-[1px] h-1 w-5 rounded-full bg-[#a8a6a0]" />}
            {a.run === "prog" && <div className="absolute bottom-[1px] flex h-1 w-[30px] rounded-full bg-[#3d3024]"><div className="h-1 w-[10px] rounded-full bg-[#ffe100]" /></div>}
          </div>
        ))}
      </div>
      <div className="ml-auto flex h-[58px] items-center pr-[25px] text-white">
        <Svg w={15} h={10}><path d="M1.500 8L7.500 2l6 6" stroke="#fff" strokeWidth="1.800" /></Svg>
        <span className="ml-[25px] pt-px text-[14.300px]">ENG</span>
        <Svg w={20} h={16} className="ml-[22px]"><path d="M1 6a12.500 12.500 0 0 1 18 0M4 9a8.500 8.500 0 0 1 12 0M7 11.700a4.500 4.500 0 0 1 6 0" stroke="#fff" strokeWidth="1.500" /><circle cx="10" cy="14" r="1.800" fill="#fff" /></Svg>
        <Svg w={21} h={18} className="ml-[10px]"><path d="M1 6.500h3.500L9 2.500v13l-4.500-4H1z" stroke="#fff" strokeWidth="1.300" strokeLinejoin="round" /><path d="M12 6a4 4 0 0 1 0 6M14.500 3.500a7.500 7.500 0 0 1 0 11M17 1.300a11 11 0 0 1 0 15.400" stroke="#fff" strokeWidth="1.300" /></Svg>
        <Svg w={21} h={18} className="ml-[9px]"><path d="M7 4.500h9a2 2 0 0 1 2 2V14a2 2 0 0 1-2 2H4a2 2 0 0 1-2-2v-3" stroke="#fff" strokeWidth="1.300" /><path d="M9 6.500h7V14H4.500v-2.500L8 9zM18.500 8h1.500v4h-1.500zM4.500 0L0 6.500h2.500L1.500 11 7 4.500H4.500z" fill="#fff" /></Svg>
        <div className="ml-[12px] flex w-[85px] flex-col items-end whitespace-nowrap pb-px text-[14.600px] leading-5">
          <span>9:37 PM</span>
          <span>20/04/2025</span>
        </div>
        <Svg w={18} h={20} className="ml-[11px]"><path d="M8 2c-4 0-6 2.500-6 6v5l-2 3h16l-2-3V9l-2-4z" fill="#fff" /><path d="M5 17h6a3 3 0 0 1-6 0z" fill="#fff" /><path d="M5 7h4l-4 5h4.500" stroke="#1d2a33" strokeWidth="1.200" /><path d="M12.500 1h4l-4 4.500h4M10.500 7h3l-3 4h3" stroke="#fff" strokeWidth="1.300" /></Svg>
      </div>
    </div>
  );
}

export default function App() {
  return (
    <div className="flex h-[1080px] w-[1920px] flex-col overflow-hidden bg-black font-['Open_Sans','Noto_Sans',sans-serif]">
      <Defs />
      <div className="flex h-[1012px]">
        <div className="flex w-2 flex-col bg-black">
          <div className="mt-[51px] h-14 rounded-tl-lg bg-[#2b2b2b]" />
          <div className="h-[2px] bg-[#555555]" />
          <div className="flex-1 bg-[#051418]" />
        </div>
        <div className="flex w-[1904px] flex-col overflow-hidden rounded-lg border border-[#404040] bg-[#1c1c1c]">
          <TabStrip />
          <AddressRow />
          <CommandBar />
          <div className="flex h-[812px] overflow-hidden">
            <Sidebar />
            <Files />
          </div>
          <StatusBar />
        </div>
        <div className="flex w-2 flex-col bg-black">
          <div className="mt-[51px] h-14 rounded-tr-lg bg-[#2b2b2b]" />
          <div className="h-[2px] bg-[#555555]" />
          <div className="flex flex-1 flex-col bg-[#242424]">
            <Svg w={6} h={10} className="mt-[7px]"><path d="M0 0l6 9.500H0z" fill="#8b8b8b" /></Svg>
            <div className="mt-[6px] h-[236px] w-1 rounded-tr bg-[#7d7d7d]" />
          </div>
        </div>
      </div>
      <div className="flex h-2 bg-[#051418]">
        <div className="w-[78px] bg-[#040a0e]" />
        <div className="ml-8 h-[2px] w-[55px] rounded-b-lg border-b border-[#0d6475]" />
        <div className="ml-[543px] h-[2px] w-[55px] rounded-b-lg border-b border-[#0d6475]" />
        <div className="ml-auto w-[78px] bg-[#020a0c]" />
        <div className="flex w-[19px] justify-end bg-[#222222]"><Svg w={14} h={4}><path d="M3 0h11L8 4z" fill="#8b8b8b" /></Svg></div>
      </div>
      <Taskbar />
    </div>
  );
}
